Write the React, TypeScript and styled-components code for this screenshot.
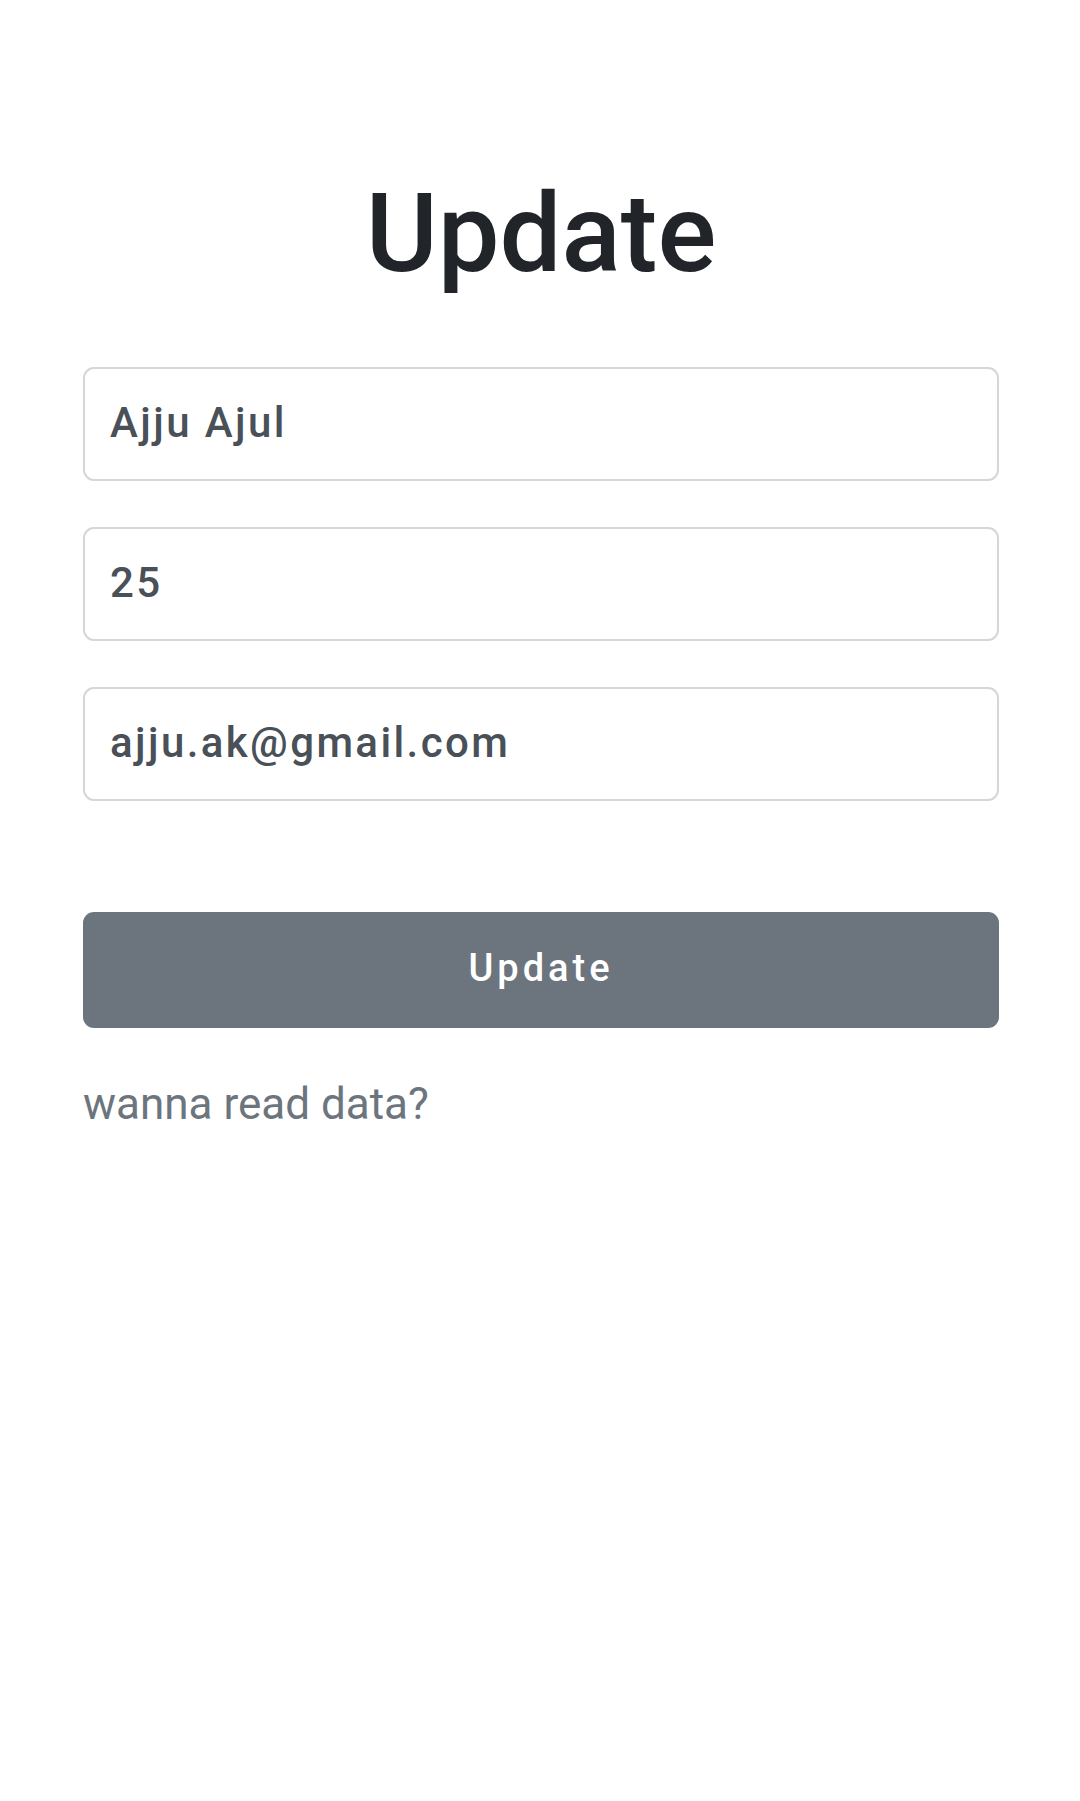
import React from 'react';
import styled, { createGlobalStyle } from 'styled-components';

const GlobalStyle = createGlobalStyle`
	html, body {
		margin: 0;
		padding: 0;
		background: #ffffff;
	}
	body {
		font-family: Roboto, 'Liberation Sans', sans-serif;
	}
`;

const Page = styled.main`
	box-sizing: border-box;
	width: 1080px;
	min-height: 1801px;
	padding: 168px 81px 0 83px;
	display: flex;
	flex-direction: column;
`;

const Title = styled.h1`
	margin: 0 0 67px;
	font-size: 110px;
	line-height: 132px;
	font-weight: 500;
	color: #212529;
	text-align: center;
`;

const Form = styled.form`
	display: flex;
	flex-direction: column;
	gap: 46px;
`;

const Field = styled.input`
	box-sizing: border-box;
	width: 100%;
	height: 114px;
	padding: 0 25px 4px;
	border: 2px solid #d4d6d9;
	border-radius: 11px;
	background: #fff;
	font-family: Roboto, 'Liberation Sans', sans-serif;
	font-size: 42px;
	font-weight: 500;
	letter-spacing: 2.4px;
	color: #495057;
	outline: none;
`;

const SubmitButton = styled.button`
	box-sizing: border-box;
	width: 100%;
	height: 116px;
	margin-top: 111px;
	padding: 0 0 4px;
	border: none;
	border-radius: 11px;
	background: #6c757d;
	color: #ffffff;
	font-family: Roboto, 'Liberation Sans', sans-serif;
	font-size: 38px;
	font-weight: 500;
	letter-spacing: 4px;
	cursor: pointer;
`;

const ReadLink = styled.a`
	margin-top: 43px;
	font-size: 44px;
	line-height: 66px;
	color: #6c757d;
	text-decoration: none;
	align-self: flex-start;
`;

export default function App() {
	return (
		<>
			<GlobalStyle />
			<Page>
				<Title>Update</Title>
				<Form onSubmit={(e) => e.preventDefault()}>
					<Field type='text' defaultValue='Ajju Ajul' />
					<Field type='number' defaultValue='25' />
					<Field type='email' defaultValue='ajju.ak@gmail.com' />
				</Form>
				<SubmitButton type='button'>Update</SubmitButton>
				<ReadLink href='#'>wanna read data?</ReadLink>
			</Page>
		</>
	);
}
